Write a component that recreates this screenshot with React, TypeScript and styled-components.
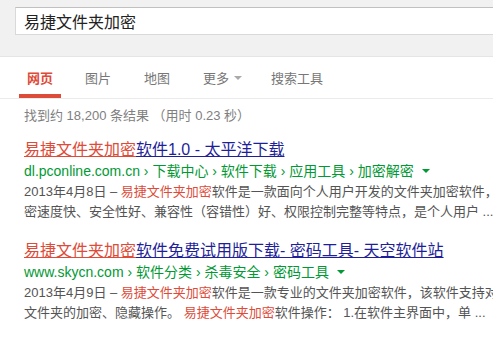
import React from "react";
import styled, { createGlobalStyle } from "styled-components";

const GlobalStyle = createGlobalStyle`
  html, body {
    margin: 0;
    padding: 0;
    background: #fff;
    overflow: hidden;
  }
  body {
    font-family: Arial, "Liberation Sans", "Noto Sans CJK SC", sans-serif;
  }
`;

const Page = styled.div`
  width: 640px;
`;

const Header = styled.div`
  height: 57px;
  background: #f1f1f1;
  border-bottom: 1px solid #e5e5e5;
  padding: 7px 0 0 15px;
  box-sizing: border-box;
`;

const SearchBox = styled.div`
  height: 28px;
  background: #fff;
  border: 1px solid #d9d9d9;
  border-top-color: #c0c0c0;
  box-sizing: border-box;
  padding-left: 8px;
  display: flex;
  align-items: center;
  font-size: 16px;
  color: #222;
`;

const Tabs = styled.div`
  height: 41px;
  display: flex;
  align-items: stretch;
  padding-left: 19px;
  border-bottom: 1px solid #ebebeb;
`;

const Tab = styled.div<{ $active?: boolean; $space?: number }>`
  display: flex;
  align-items: center;
  gap: 5px;
  padding: 4px 8px 0;
  margin-right: ${(p) => p.$space ?? 17}px;
  font-size: 13px;
  color: ${(p) => (p.$active ? "#dd4b39" : "#777")};
  font-weight: ${(p) => (p.$active ? "bold" : "normal")};
  border-bottom: 4px solid ${(p) => (p.$active ? "#dd4b39" : "transparent")};
`;

const Caret = styled.span<{ $color: string }>`
  display: inline-block;
  width: 0;
  height: 0;
  border-left: 4px solid transparent;
  border-right: 4px solid transparent;
  border-top: 4px solid ${(p) => p.$color};
`;

const Stats = styled.div`
  padding: 9px 0 0 24px;
  height: 33px;
  box-sizing: border-box;
  font-size: 13px;
  line-height: 16px;
  color: #808080;
`;

const Results = styled.div`
  padding-left: 24px;
  padding-top: 8px;
  display: flex;
  flex-direction: column;
  gap: 19px;
`;

const Result = styled.div`
  white-space: nowrap;
`;

const Title = styled.div`
  font-size: 16px;
  line-height: 20px;
`;

const TitlePart = styled.span<{ $hit?: boolean }>`
  color: ${(p) => (p.$hit ? "#dd4b39" : "#1f1f99")};
  text-decoration: underline;
  text-decoration-color: ${(p) => (p.$hit ? "#dd4b39" : "#1f1f99")};
`;

const Url = styled.div`
  font-size: 14px;
  line-height: 22px;
  color: #009933;
  display: flex;
  align-items: center;
  gap: 8px;
`;

const Snippet = styled.div`
  font-size: 13px;
  line-height: 20px;
  color: #545454;
`;

const Hit = styled.span`
  color: #dd4b39;
`;

interface ResultItem {
  title: string;
  url: string;
  lines: React.ReactNode[];
}

const KEY = "易捷文件夹加密";

const results: ResultItem[] = [
  {
    title: "软件1.0 - 太平洋下载",
    url: "dl.pconline.com.cn › 下载中心 › 软件下载 › 应用工具 › 加密解密",
    lines: [
      <>2013年4月8日 – <Hit>{KEY}</Hit>软件是一款面向个人用户开发的文件夹加密软件，具有加</>,
      <>密速度快、安全性好、兼容性（容错性）好、权限控制完整等特点，是个人用户 ...</>,
    ],
  },
  {
    title: "软件免费试用版下载- 密码工具- 天空软件站",
    url: "www.skycn.com › 软件分类 › 杀毒安全 › 密码工具",
    lines: [
      <>2013年4月9日 – <Hit>{KEY}</Hit>软件是一款专业的文件夹加密软件，该软件支持对文件</>,
      <>文件夹的加密、隐藏操作。 <Hit>{KEY}</Hit>软件操作： 1.在软件主界面中，单 ...</>,
    ],
  },
];

export default function App() {
  return (
    <Page>
      <GlobalStyle />
      <Header>
        <SearchBox>易捷文件夹加密</SearchBox>
      </Header>
      <Tabs>
        <Tab $active $space={16}>网页</Tab>
        <Tab>图片</Tab>
        <Tab>地图</Tab>
        <Tab $space={13}>
          更多<Caret $color="#aaa" />
        </Tab>
        <Tab>搜索工具</Tab>
      </Tabs>
      <Stats>找到约 18,200 条结果 （用时 0.23 秒）</Stats>
      <Results>
        {results.map((r) => (
          <Result key={r.url}>
            <Title>
              <TitlePart $hit>{KEY}</TitlePart>
              <TitlePart>{r.title}</TitlePart>
            </Title>
            <Url>
              <span>{r.url}</span>
              <Caret $color="#009933" />
            </Url>
            {r.lines.map((l, i) => (
              <Snippet key={i}>{l}</Snippet>
            ))}
          </Result>
        ))}
      </Results>
    </Page>
  );
}
